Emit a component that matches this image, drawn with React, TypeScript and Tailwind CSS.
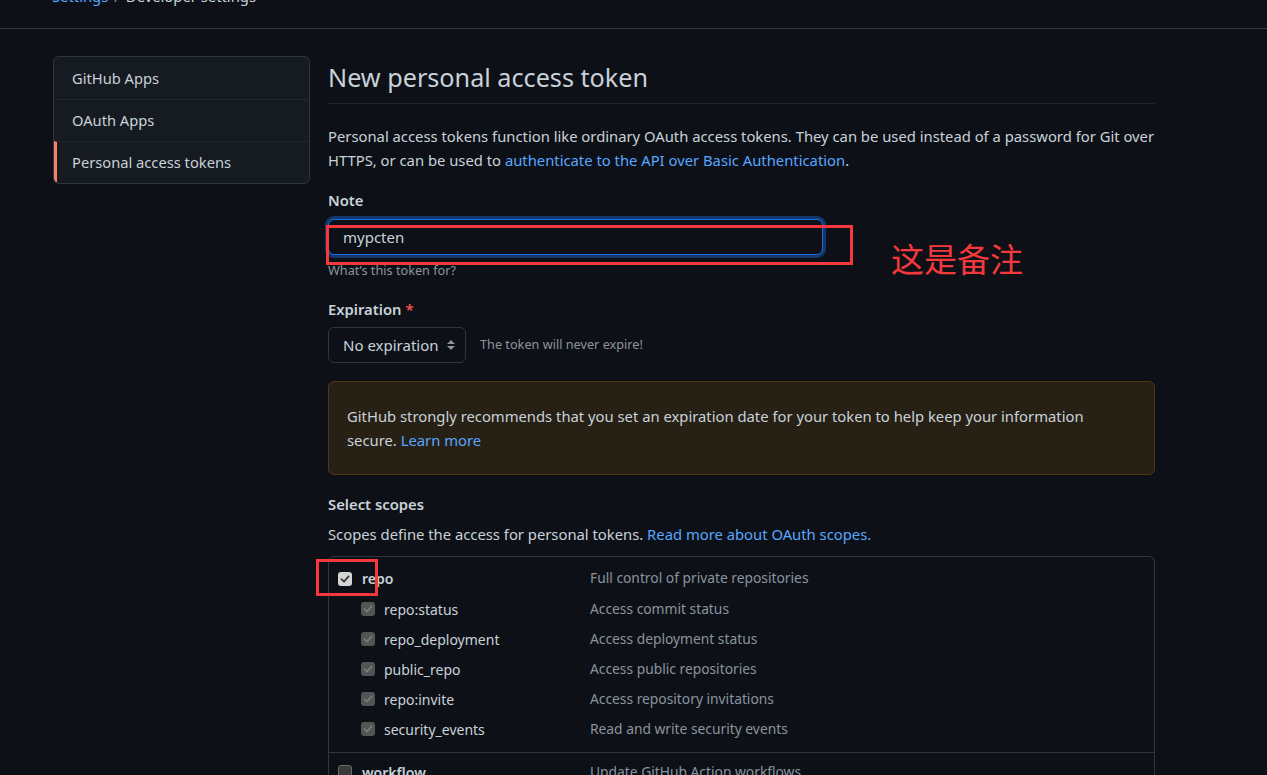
import { useState } from 'react';

const subScopes = [
  { name: 'repo:status', desc: 'Access commit status' },
  { name: 'repo_deployment', desc: 'Access deployment status' },
  { name: 'public_repo', desc: 'Access public repositories' },
  { name: 'repo:invite', desc: 'Access repository invitations' },
  { name: 'security_events', desc: 'Read and write security events' },
];

const Check = ({ tone }: { tone: 'on' | 'sub' | 'off' }) => {
  if (tone === 'off') {
    return <span className="block h-[14px] w-[14px] rounded-[3px] border border-[#6b6b6b] bg-[#3b3b3b]" />;
  }

  const box = tone === 'on' ? 'bg-[#d4d4d4]' : 'bg-[#545454]';
  const mark = tone === 'on' ? '#3a3a3a' : '#7a7a7a';

  return (
    <span className={`flex h-[14px] w-[14px] items-center justify-center rounded-[3px] ${box}`}>
      <svg width="10" height="10" viewBox="0 0 10 10" fill="none">
        <path d="M1.5 5.2 4 7.6 8.6 2.4" stroke={mark} strokeWidth="1.8" strokeLinecap="round" strokeLinejoin="round" />
      </svg>
    </span>
  );
};

const Sidebar = () => {
  const items = ['GitHub Apps', 'OAuth Apps', 'Personal access tokens'];

  return (
    <nav className="w-[257px] shrink-0 self-start overflow-hidden rounded-md border border-[#30363d] bg-[#161b22]">
      {items.map((item, i) => (
        <div
          key={item}
          className={`flex h-[42px] items-center text-[14.7px] text-[#c9d1d9] ${
            i > 0 ? 'border-t border-[#21262d]' : ''
          } ${i === 2 ? 'border-l-[3px] border-l-[#f78166] pl-[15px]' : 'pl-[18px]'}`}
        >
          {item}
        </div>
      ))}
    </nav>
  );
};

const App = () => {
  const [note, setNote] = useState('mypcten');

  return (
    <div
      className="relative min-h-screen bg-[#0d1117] text-[#c9d1d9]"
      style={{ fontFamily: '"Noto Sans", "Noto Sans CJK SC", sans-serif' }}
    >
      <div className="h-[29px] overflow-hidden border-b border-[#30363d]">
        <div className="-mt-[16px] pl-[52px] text-[14.8px] leading-[24px]">
          <a className="text-[#58a6ff]">Settings</a>
          <span className="mx-[6px] text-[#8b949e]">/</span>
          <span>Developer settings</span>
        </div>
      </div>

      <div className="flex gap-[18px] pl-[53px] pt-[27px]">
        <Sidebar />

        <main className="w-[827px] text-[14.8px]">
          <h2 className="mt-[5px] border-b border-[#21262d] pb-[9px] text-[25.2px] font-normal leading-[33px] text-[#c9d1d9]">
            New personal access token
          </h2>

          <p className="mt-[20px] leading-[24px]">
            Personal access tokens function like ordinary OAuth access tokens. They can be used instead of a password for Git over
            HTTPS, or can be used to <a className="text-[#58a6ff]">authenticate to the API over Basic Authentication</a>.
          </p>

          <label className="mt-[16px] block font-semibold leading-[24px]">Note</label>
          <input
            value={note}
            onChange={(e) => setNote(e.target.value)}
            className="mt-[7px] block h-[36px] w-[495px] rounded-md border border-[#1f6feb] bg-[#0d1117] px-[14px] text-[15px] text-[#c9d1d9] outline-none ring-[3px] ring-[#1f6feb]/40"
          />
          <p className="mt-[6px] text-[12.7px] leading-[18px] text-[#8b949e]">What’s this token for?</p>

          <label className="mt-[18px] block font-semibold leading-[24px]">
            Expiration <span className="text-[#f85149]">*</span>
          </label>
          <div className="mt-[6px] flex items-center gap-[14px]">
            <div className="flex h-[36px] w-[138px] items-center justify-between rounded-md border border-[#30363d] pl-[14px] pr-[9px] text-[15px]">
              <span>No expiration</span>
              <svg width="10" height="14" viewBox="0 0 10 14" fill="#8b949e">
                <path d="M5 2 9 6H1z" />
                <path d="M5 12 1 8h8z" />
              </svg>
            </div>
            <span className="text-[12.7px] text-[#8b949e]">The token will never expire!</span>
          </div>

          <div className="mt-[18px] rounded-md border border-[#4d3a12] bg-[#272115] px-[18px] py-[22px] leading-[24px]">
            GitHub strongly recommends that you set an expiration date for your token to help keep your information
            <br />
            secure. <a className="text-[#58a6ff]">Learn more</a>
          </div>

          <h3 className="mt-[17px] font-semibold leading-[24px]">Select scopes</h3>
          <p className="mt-[6px] leading-[24px]">
            Scopes define the access for personal tokens.{' '}
            <a className="text-[#58a6ff]">Read more about OAuth scopes.</a>
          </p>

          <div className="mt-[10px] rounded-t-md border border-b-0 border-[#30363d] text-[14px]">
            <div className="pb-[8px] pt-[6px]">
              <div className="flex h-[31px] items-center pl-[9px]">
                <div className="flex w-[252px] items-center gap-[10px]">
                  <Check tone="on" />
                  <span className="font-semibold">repo</span>
                </div>
                <span className="text-[13.8px] text-[#8b949e]">Full control of private repositories</span>
              </div>
              {subScopes.map((s) => (
                <div key={s.name} className="flex h-[30px] items-center pl-[32px]">
                  <div className="flex w-[229px] items-center gap-[9px]">
                    <Check tone="sub" />
                    <span>{s.name}</span>
                  </div>
                  <span className="text-[13.8px] text-[#8b949e]">{s.desc}</span>
                </div>
              ))}
            </div>
            <div className="border-t border-[#30363d] pt-[4px]">
              <div className="flex h-[30px] items-center pl-[9px]">
                <div className="flex w-[252px] items-center gap-[10px]">
                  <Check tone="off" />
                  <span className="font-semibold">workflow</span>
                </div>
                <span className="text-[13.8px] text-[#8b949e]">Update GitHub Action workflows</span>
              </div>
            </div>
          </div>
        </main>
      </div>

      {/* annotations drawn over the screenshot */}
      <div className="pointer-events-none absolute left-[326px] top-[225px] h-[40px] w-[527px] border-[3px] border-[#f5383b]" />
      <div className="pointer-events-none absolute left-[316px] top-[559px] h-[37px] w-[62px] border-[3px] border-[#f5383b]" />
      <div
        className="pointer-events-none absolute left-[891px] top-[236px] text-[33px] leading-[44px] text-[#f5383b]"
        style={{ fontFamily: '"Noto Sans CJK SC", sans-serif' }}
      >
        这是备注
      </div>
    </div>
  );
};

export default App;
